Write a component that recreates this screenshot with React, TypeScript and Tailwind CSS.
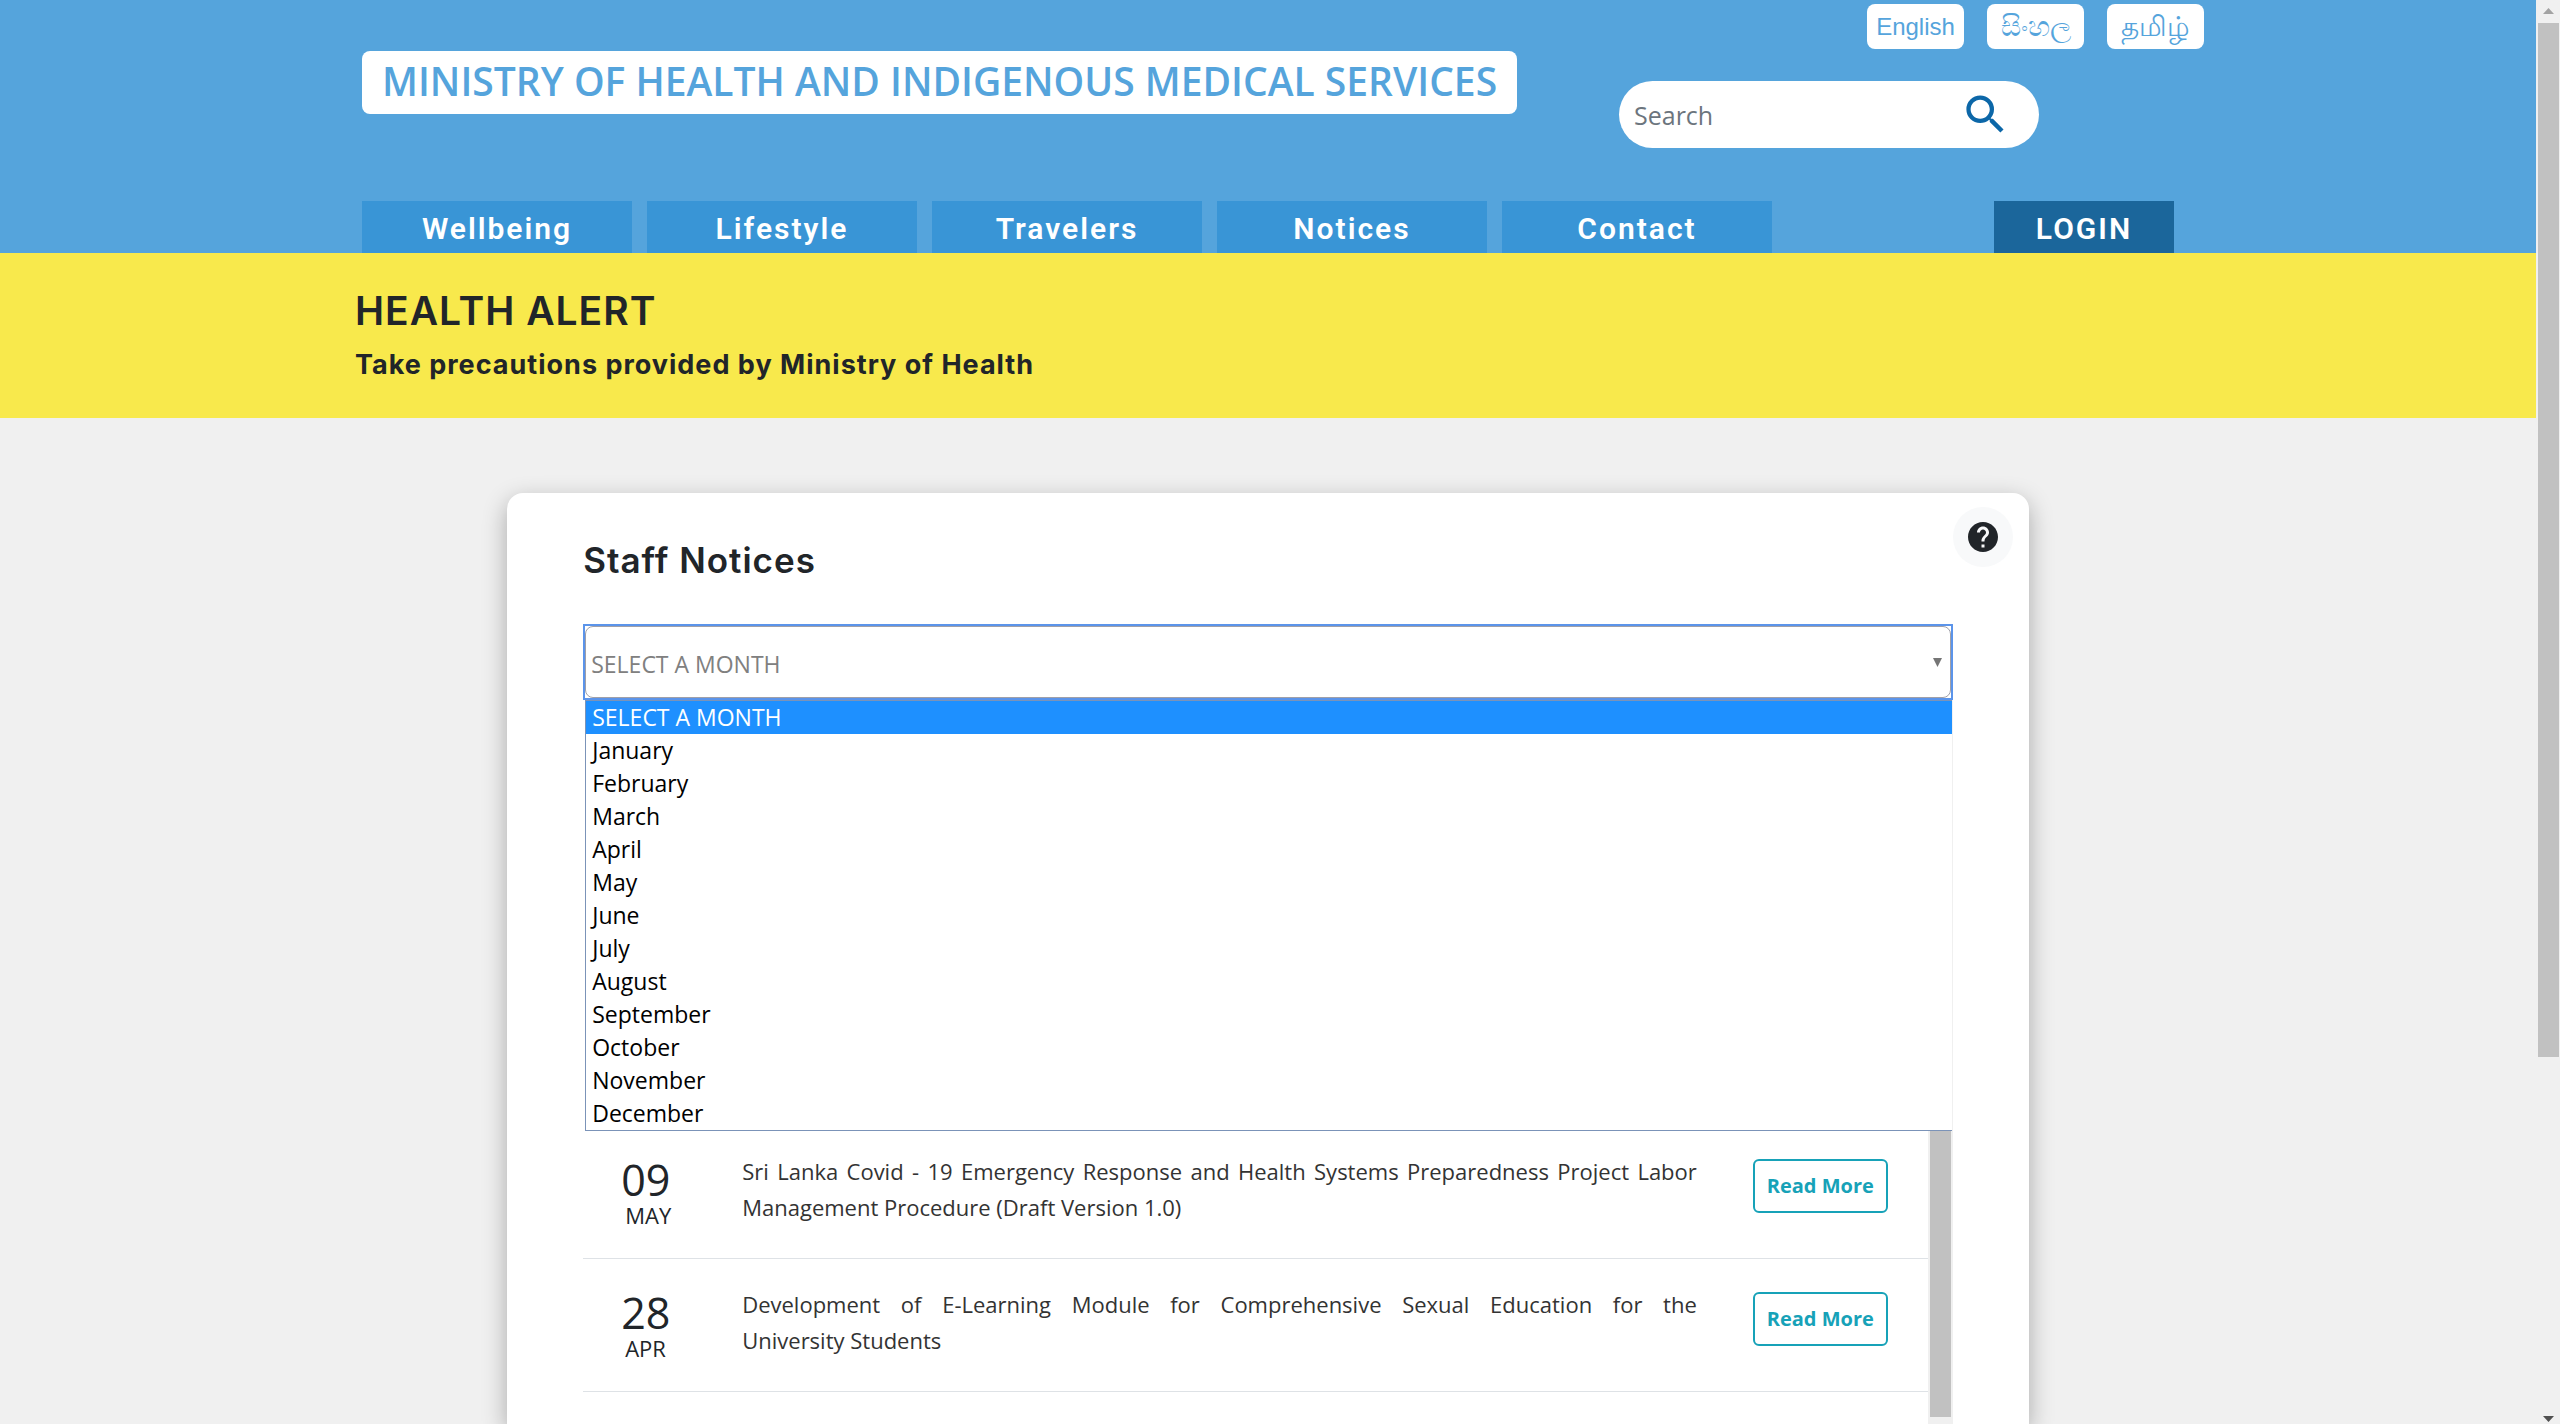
import { MdHelp, MdSearch } from "react-icons/md";

const navItems = ["Wellbeing", "Lifestyle", "Travelers", "Notices", "Contact"];

const languages = [
  { label: "English", lang: "en", size: "text-2xl" },
  { label: "සිංහල", lang: "si", size: "text-[28px] leading-8" },
  { label: "தமிழ்", lang: "ta", size: "text-[28px] leading-8" },
];

const months = [
  "SELECT A MONTH",
  "January",
  "February",
  "March",
  "April",
  "May",
  "June",
  "July",
  "August",
  "September",
  "October",
  "November",
  "December",
];

const notices = [
  {
    day: "09",
    month: "MAY",
    title:
      "Sri Lanka Covid - 19 Emergency Response and Health Systems Preparedness Project Labor Management Procedure (Draft Version 1.0)",
  },
  {
    day: "28",
    month: "APR",
    title:
      "Development of E-Learning Module for Comprehensive Sexual Education for the University\u00a0Students",
  },
];

function Header() {
  return (
    <header className="flex h-[253px] shrink-0 flex-col justify-between bg-[#55a4dc] pr-[332px] pl-[362px]">
      <div className="flex justify-between">
        <h1 className="mt-[51px] flex h-[63px] items-center rounded-lg bg-white px-5 pb-[2px] font-['Open_Sans',sans-serif] text-[39px] font-semibold whitespace-nowrap text-[#55a4dc]">
          MINISTRY OF HEALTH AND INDIGENOUS MEDICAL SERVICES
        </h1>
        <div className="flex flex-col pt-1">
          <div className="flex justify-end gap-[23px]">
            {languages.map((l) => (
              <button
                key={l.lang}
                lang={l.lang}
                className={`flex h-[45px] w-[97px] items-center justify-center rounded-lg bg-white font-['Liberation_Sans',sans-serif] whitespace-nowrap text-[#55a4dc] ${l.size}`}
              >
                {l.label}
              </button>
            ))}
          </div>
          <form className="mt-8 mr-[165px] flex h-[67px] w-[420px] items-center rounded-full bg-white pr-7 pl-[15px]">
            <input
              type="text"
              aria-label="Search"
              placeholder="Search"
              className="min-w-0 flex-1 bg-transparent pt-[2px] font-['Open_Sans',sans-serif] text-[25px] outline-none placeholder:text-[#6c757d]"
            />
            <button type="button" aria-label="Submit search" className="text-[#0c67a8]">
              <MdSearch size={51} />
            </button>
          </form>
        </div>
      </div>
      <nav className="flex items-end gap-[15px] pr-[30px] font-['Roboto',sans-serif] text-[30px] font-semibold tracking-[2px] text-white">
        {navItems.map((item) => (
          <a
            key={item}
            href="#"
            className="flex h-[52px] w-[270px] items-center justify-center bg-[#3995d6] pt-[2px]"
          >
            {item}
          </a>
        ))}
        <button className="ml-auto h-[52px] w-[180px] bg-[#1b669b] pt-[2px] tracking-[2px]">
          LOGIN
        </button>
      </nav>
    </header>
  );
}

function HealthAlert() {
  return (
    <section className="flex h-[165px] shrink-0 flex-col bg-[#f8e94c] pt-8 pl-[355px] font-['Inter',sans-serif] text-[#212529]">
      <h2 className="text-[39px] leading-[52px] font-semibold tracking-[1px]">HEALTH ALERT</h2>
      <p className="mt-2 text-[27px] leading-10 font-bold tracking-[1px]">
        Take precautions provided by Ministry of Health
      </p>
    </section>
  );
}

function MonthPicker() {
  return (
    <div className="relative mt-[38px] font-['Open_Sans',sans-serif] text-[23px]">
      <div className="relative border-2 border-[#5b94ea] bg-white">
        <select
          aria-label="Month"
          defaultValue={months[0]}
          className="block h-[72px] w-full appearance-none rounded-lg border border-[#a0a0a8] bg-white pt-1 pl-[5px] text-[#808080] outline-none"
        >
          {months.map((m) => (
            <option key={m}>{m}</option>
          ))}
        </select>
        <svg
          viewBox="0 0 9 9"
          aria-hidden="true"
          className="pointer-events-none absolute top-8 right-[9px] size-[9px]"
        >
          <path d="M0 0H9L4.5 9Z" fill="#757575" />
        </svg>
      </div>
      <ul
        role="listbox"
        aria-label="Months"
        className="absolute top-full right-px left-[2px] z-10 border-y border-l border-[#7b93b8] bg-white text-black"
      >
        {months.map((m, i) => (
          <li
            key={m}
            role="option"
            aria-selected={i === 0}
            className="h-[33px] pl-[6px] leading-[33px] aria-selected:bg-[#1e90ff] aria-selected:text-white"
          >
            {m}
          </li>
        ))}
      </ul>
    </div>
  );
}

function NoticeList() {
  return (
    <div className="flex flex-1">
      <div className="flex-1 pt-[426px] font-['Open_Sans',sans-serif] text-[#212529]">
        {notices.map((n) => (
          <article
            key={n.day}
            className="flex h-[133px] items-start border-b border-[#dee2e6] pr-10"
          >
            <div className="w-[159px] pt-[29px] pl-[38px]">
              <div className="text-[43px] leading-[50px]">{n.day}</div>
              <div className="pl-1 text-[22px] leading-5">{n.month}</div>
            </div>
            <p className="min-w-0 flex-1 pt-[27px] text-justify text-[22px] leading-9 text-[#333]">
              {n.title}
            </p>
            <button className="mt-[33px] ml-14 h-[54px] w-[135px] rounded-md border-2 border-[#17a2b8] text-[20px] font-bold whitespace-nowrap text-[#17a2b8]">
              Read More
            </button>
          </article>
        ))}
      </div>
      <div className="flex w-[25px] flex-col bg-[#f0f0f0] px-[2px] pb-[7px]">
        <div className="flex-1 bg-[#c1c1c1]" />
      </div>
    </div>
  );
}

function PageScrollbar() {
  return (
    <div className="flex w-6 shrink-0 flex-col items-center bg-[#f0f0f0]" aria-hidden="true">
      <svg viewBox="0 0 24 23" className="h-[23px] w-6">
        <path d="M7 14L12.5 8L18 14Z" fill="#a3a3a3" />
      </svg>
      <div className="flex w-full flex-1 pr-px pl-[2px]">
        <div className="h-[75%] w-full bg-[#c1c1c1]" />
      </div>
      <svg viewBox="0 0 24 23" className="h-[23px] w-6">
        <path d="M7 15L12.5 21L18 15Z" fill="#505050" />
      </svg>
    </div>
  );
}

export default function App() {
  return (
    <div className="flex h-screen overflow-hidden bg-[#f0f0f0]">
      <div className="flex min-w-0 flex-1 flex-col">
        <Header />
        <HealthAlert />
        <main className="flex flex-1 justify-center pt-[75px]">
          <section className="relative flex w-[60%] flex-col rounded-t-2xl bg-white px-[76px] pt-[42px] shadow-[0_8px_24px_rgba(0,0,0,0.3)]">
            <button
              aria-label="Help"
              className="absolute top-[14px] right-4 flex size-[60px] items-center justify-center rounded-full bg-[#f8f9fa] text-[#212529]"
            >
              <MdHelp size={36} />
            </button>
            <h2 className="font-['Inter',sans-serif] text-[35px] leading-[51px] font-semibold tracking-[1px] text-[#212529]">
              Staff Notices
            </h2>
            <MonthPicker />
            <NoticeList />
          </section>
        </main>
      </div>
      <PageScrollbar />
    </div>
  );
}
